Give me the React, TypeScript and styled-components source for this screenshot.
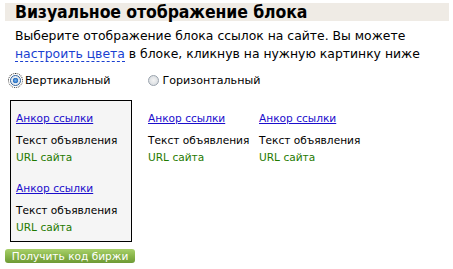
import styled, { createGlobalStyle } from 'styled-components';

const GlobalStyle = createGlobalStyle`
  html, body { margin: 0; padding: 0; background: #ffffff; }
  body { font-family: "DejaVu Sans", Verdana, sans-serif; color: #000; }
`;

const Page = styled.div`
  width: 453px;
  height: 269px;
  padding: 3px 4px 0 5px;
  box-sizing: border-box;
  overflow: hidden;
`;

const TitleBar = styled.h2`
  margin: 0;
  height: 18px;
  padding: 0 0 0 10px;
  background: #efebe5;
  font-family: "DejaVu Sans Condensed", "DejaVu Sans", Tahoma, sans-serif;
  font-size: 17.5px;
  line-height: 19px;
  font-weight: bold;
  letter-spacing: -0.1px;
`;

const Intro = styled.p`
  margin: 6px 0 0 10px;
  font-size: 12.4px;
  line-height: 18px;
`;

const DashedLink = styled.a`
  color: #1a3fd1;
  text-decoration: none;
  border-bottom: 1px dashed #1a3fd1;
`;

const RadioRow = styled.div`
  display: flex;
  align-items: center;
  margin: 11px 0 0 5px;
  gap: 37px;
  font-family: "DejaVu Sans", Tahoma, sans-serif;
  font-size: 11.1px;
`;

const RadioLabel = styled.label`
  display: flex;
  align-items: center;
  gap: 4px;
`;

const RadioDot = styled.span<{ checked: boolean }>`
  width: 11px;
  height: 11px;
  border-radius: 50%;
  box-sizing: border-box;
  border: 1px solid ${p => (p.checked ? '#2f5f9a' : '#9aa3ad')};
  background: ${p =>
    p.checked
      ? 'radial-gradient(circle, #6fb0ee 0, #2a6fc0 2.5px, #dfe7ef 3px, #f6f8fa 5px)'
      : 'radial-gradient(circle, #f4f4f4 0, #d9dde1 5px)'};
  outline: ${p => (p.checked ? '1px dotted #333' : 'none')};
  outline-offset: 1px;
`;

const Blocks = styled.div`
  display: flex;
  align-items: flex-start;
  margin: 13px 0 0 5px;
`;

const BlockBox = styled.div<{ selected?: boolean }>`
  width: ${p => (p.selected ? '122px' : '111px')};
  margin-right: ${p => (p.selected ? '16px' : '0')};
  box-sizing: border-box;
  padding: ${p => (p.selected ? '9px 0 5px 5px' : '10px 0 0 0')};
  border: ${p => (p.selected ? '1px solid #000' : 'none')};
  background: ${p => (p.selected ? '#f5f5f5' : 'transparent')};
  display: flex;
  flex-direction: column;
  gap: 14px;
`;

const Ad = styled.div`
  display: flex;
  flex-direction: column;
  font-size: 10.6px;
  line-height: 17px;
`;

const AnchorLink = styled.a`
  color: #1a0dcc;
  text-decoration: underline;
  margin-bottom: 5px;
`;

const AdText = styled.span`
  color: #000;
`;

const AdUrl = styled.span`
  color: #1f7a00;
`;

const GetButton = styled.button`
  display: block;
  margin: 7px 0 0 0;
  width: 130px;
  height: 14px;
  padding: 0;
  border: none;
  border-radius: 3px;
  background: linear-gradient(#a8d06a, #86b347 55%, #6e9a36);
  color: #fff;
  font-family: "DejaVu Sans", Verdana, sans-serif;
  font-size: 10.6px;
  line-height: 14px;
  text-align: center;
`;

const AdItem = () => (
  <Ad>
    <AnchorLink href="#">Анкор ссылки</AnchorLink>
    <AdText>Текст объявления</AdText>
    <AdUrl>URL сайта</AdUrl>
  </Ad>
);

export default function App() {
  return (
    <Page>
      <GlobalStyle />
      <TitleBar>Визуальное отображение блока</TitleBar>
      <Intro>
        Выберите отображение блока ссылок на сайте. Вы можете{' '}
        <DashedLink href="#">настроить цвета</DashedLink> в блоке, кликнув на нужную картинку ниже
      </Intro>
      <RadioRow>
        <RadioLabel>
          <RadioDot checked />
          Вертикальный
        </RadioLabel>
        <RadioLabel>
          <RadioDot checked={false} />
          Горизонтальный
        </RadioLabel>
      </RadioRow>
      <Blocks>
        <BlockBox selected>
          <AdItem />
          <AdItem />
        </BlockBox>
        <BlockBox>
          <AdItem />
        </BlockBox>
        <BlockBox>
          <AdItem />
        </BlockBox>
      </Blocks>
      <GetButton>Получить код биржи</GetButton>
    </Page>
  );
}
